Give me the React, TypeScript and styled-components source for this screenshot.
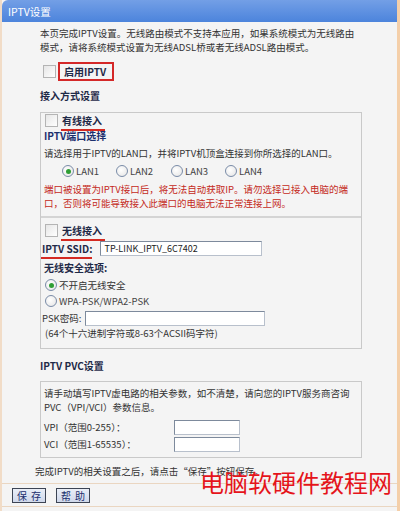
import React from 'react';
import styled, { createGlobalStyle } from 'styled-components';

const Global = createGlobalStyle`
  html, body { margin: 0; padding: 0; background: #ffffff; }
  body {
    width: 400px; height: 511px; overflow: hidden;
    font-family: "Noto Sans CJK SC", "Noto Sans", sans-serif;
    font-size: 9.5px; color: #333;
  }
`;

const Frame = styled.div`
  position: relative;
  width: 400px; height: 511px; box-sizing: border-box;
  background: #f4f4f4;
  border-left: 2px solid #f1dcc7;
  border-right: 3px solid #f4cfa9;
  display: flex; flex-direction: column;
`;

const TitleBar = styled.div`
  height: 22px; flex: none;
  background: linear-gradient(#739fe6, #4c84dc);
  border-top-left-radius: 6px;
  color: #fff; font-size: 10.5px;
  display: flex; align-items: center; padding-left: 6px;
`;

const Body = styled.div`
  display: flex; flex-direction: column;
  padding-left: 38px;
`;

const Row = styled.div<{ $h?: number; $mt?: number; $ml?: number }>`
  display: flex; align-items: center;
  height: ${p => p.$h ?? 14}px;
  margin-top: ${p => p.$mt ?? 0}px;
  margin-left: ${p => p.$ml ?? 0}px;
  white-space: nowrap;
`;

const Text = styled.div<{ $red?: boolean }>`
  font-size: 9.5px;
  line-height: 14px; height: 14px; white-space: nowrap;
  color: ${p => (p.$red ? '#c42a22' : '#333')};
`;

const Bold = styled.span<{ $navy?: boolean }>`
  font-size: 10px;
  font-weight: 700;
  color: ${p => (p.$navy ? '#1c2f6e' : '#1f2a48')};
`;

const Underlined = styled.span`
  position: relative;
  font-size: 10px;
  font-weight: 700; color: #1f2a48;
  &::after {
    content: ''; position: absolute; left: -1px; right: -3px; bottom: -3px;
    height: 2px; background: #d42a22;
  }
`;

const Check = styled.span`
  display: inline-block; flex: none;
  width: 11px; height: 11px;
  border: 1px solid #b4b4b4;
  background: linear-gradient(135deg, #e6e6e6, #ffffff);
`;

const EnableBox = styled.div`
  display: flex; align-items: center;
  height: 19px; box-sizing: border-box;
  margin-left: 2px;
  padding: 0 6px 0 4px;
  border: 2px solid #d42828;
`;

const Radio = styled.span<{ $on?: boolean }>`
  display: inline-flex; align-items: center; justify-content: center; flex: none;
  width: 10px; height: 10px; border-radius: 50%;
  border: 1px solid #7a8ca8;
  background: radial-gradient(circle at 40% 40%, #ffffff, #e3e3e3);
  margin-right: 2px;
  &::after {
    content: '';
    display: ${p => (p.$on ? 'block' : 'none')};
    width: 5px; height: 5px; border-radius: 50%;
    background: #2f9e35;
  }
`;

const RadioItem = styled.div<{ $w?: number }>`
  display: flex; align-items: center;
  width: ${p => (p.$w ? `${p.$w}px` : 'auto')};
  font-size: 9.5px; color: #444;
`;

const Box = styled.div<{ $mt?: number; $pb?: number }>`
  width: 322px; box-sizing: border-box;
  margin-top: ${p => p.$mt ?? 0}px;
  border: 1px solid #c9c9c9;
  padding: 0 4px ${p => p.$pb ?? 0}px 3px;
  display: flex; flex-direction: column;
`;

const Separator = styled.div`
  height: 2px; background: #d4d4d4;
  margin: 6px -4px 0 -3px;
`;

const Input = styled.div<{ $w: number; $ml?: number; $mr?: number }>`
  width: ${p => p.$w}px; height: 15px; box-sizing: border-box;
  margin-left: ${p => (p.$mr !== undefined ? 'auto' : `${p.$ml ?? 0}px`)};
  margin-right: ${p => p.$mr ?? 0}px;
  border: 1px solid #7d8a9c;
  border-right-color: #b8c0cc; border-bottom-color: #b8c0cc;
  background: #fff;
  font-size: 9px; line-height: 13px; padding-left: 3px; color: #222;
`;

const Footer = styled.div`
  margin-top: 5px;
  border-top: 1px solid #ead6c1;
  border-bottom: 1px solid #ead6c1;
  height: 22px;
  display: flex; align-items: center; gap: 10px;
  padding-left: 10px;
`;

const Button = styled.button`
  width: 34px; height: 15px; padding: 0;
  font-family: inherit; font-size: 10px; line-height: 13px;
  color: #1c2f6e; letter-spacing: 4px; text-indent: 4px;
  background: linear-gradient(#e9eef7, #cfd8eb);
  border: 1px solid #3c4454;
`;

const Watermark = styled.div`
  position: absolute; left: 198px; top: 467px;
  font-size: 24px; line-height: 30px; color: #e5141b;
  white-space: nowrap; pointer-events: none;
`;

export default function App() {
  return (
    <>
      <Global />
      <Frame>
        <TitleBar>IPTV设置</TitleBar>
        <Body>
          <Row $h={28} $mt={4}>
            <div>
              <Text>本页完成IPTV设置。无线路由模式不支持本应用，如果系统模式为无线路由</Text>
              <Text>模式，请将系统模式设置为无线ADSL桥或者无线ADSL路由模式。</Text>
            </div>
          </Row>
          <Row $h={19} $mt={8} $ml={3}>
            <Check />
            <EnableBox><Bold>启用IPTV</Bold></EnableBox>
          </Row>
          <Row $mt={7}><Bold>接入方式设置</Bold></Row>
          <Box $mt={10} $pb={8}>
            <Row $h={15} $ml={1}>
              <Check />
              <Row $ml={4}><Underlined>有线接入</Underlined></Row>
            </Row>
            <Row><Bold $navy>IPTV端口选择</Bold></Row>
            <Row $mt={4}><Text>请选择用于IPTV的LAN口，并将IPTV机顶盒连接到你所选择的LAN口。</Text></Row>
            <Row $h={16} $mt={3} $ml={18}>
              <RadioItem $w={54}><Radio $on />LAN1</RadioItem>
              <RadioItem $w={55}><Radio />LAN2</RadioItem>
              <RadioItem $w={54}><Radio />LAN3</RadioItem>
              <RadioItem><Radio />LAN4</RadioItem>
            </Row>
            <Row $h={28} $mt={3}>
              <div>
                <Text $red>端口被设置为IPTV接口后，将无法自动获取IP。请勿选择已接入电脑的端</Text>
                <Text $red>口，否则将可能导致接入此端口的电脑无法正常连接上网。</Text>
              </div>
            </Row>
            <Separator />
            <Row $h={16} $mt={4} $ml={1}>
              <Check />
              <Row $ml={4}><Underlined>无线接入</Underlined></Row>
            </Row>
            <Row $h={16} $mt={2} $ml={-2}>
              <Underlined>IPTV SSID</Underlined><Bold>:</Bold>
              <Input $w={162} $ml={8}>TP-LINK_IPTV_6C7402</Input>
            </Row>
            <Row $mt={4}><Bold>无线安全选项:</Bold></Row>
            <Row $h={16} $mt={3} $ml={1}>
              <RadioItem><Radio $on /><Text>不开启无线安全</Text></RadioItem>
            </Row>
            <Row $h={16} $ml={1}>
              <RadioItem><Radio />WPA-PSK/WPA2-PSK</RadioItem>
            </Row>
            <Row $h={16} $mt={1} $ml={-2}>
              <Text>PSK密码:</Text>
              <Input $w={180} $ml={4} />
            </Row>
            <Row $ml={1}><Text>(64个十六进制字符或8-63个ACSII码字符)</Text></Row>
          </Box>
          <Row $mt={9}><Bold>IPTV PVC设置</Bold></Row>
          <Box $mt={9} $pb={5}>
            <Row $h={28} $mt={4}>
              <div>
                <Text>请手动填写IPTV虚电路的相关参数，如不清楚，请向您的IPTV服务商咨询</Text>
                <Text>PVC（VPI/VCI）参数信息。</Text>
              </div>
            </Row>
            <Row $h={16} $mt={5}>
              <Text>VPI（范围0-255）：</Text>
              <Input $w={66} $mr={117} />
            </Row>
            <Row $h={16} $mt={1}>
              <Text>VCI（范围1-65535）：</Text>
              <Input $w={66} $mr={117} />
            </Row>
          </Box>
          <Row $mt={6} $ml={-5}><Text>完成IPTV的相关设置之后，请点击“保存”按钮保存。</Text></Row>
        </Body>
        <Footer>
          <Button>保存</Button>
          <Button>帮助</Button>
        </Footer>
        <Watermark>电脑软硬件教程网</Watermark>
      </Frame>
    </>
  );
}
